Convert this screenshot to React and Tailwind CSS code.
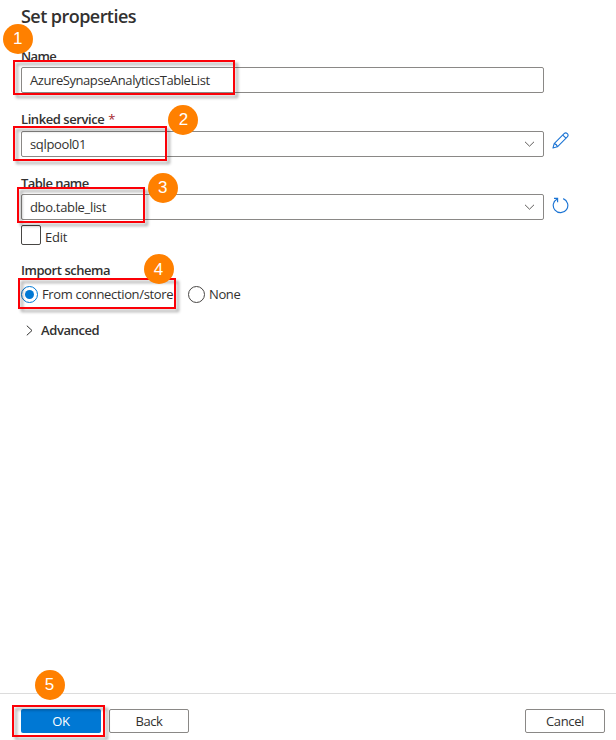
function Chevron() {
  return (
    <svg className="mr-[8px] h-[6px] w-[11px]" viewBox="0 0 11 6" fill="none" stroke="#605e5c" strokeWidth="1">
      <path d="M1 0.8 L5.5 5.2 L10 0.8" />
    </svg>
  );
}

function Pencil() {
  return (
    <svg className="-mt-[2px] h-[17px] w-[17px]" viewBox="0 0 18 18" fill="none" stroke="#1b74d4" strokeWidth="1.15" strokeLinejoin="round">
      <path d="M1 17 L2.3 12.3 L12.8 1.8 C13.8 0.8 15.1 0.7 16.2 1.8 C17.3 2.9 17.2 4.2 16.2 5.2 L5.7 15.7 Z" />
      <path d="M11.4 3.2 L14.8 6.6 M2.3 12.3 C4 12.6 5.4 14 5.7 15.7" />
    </svg>
  );
}

function Refresh() {
  return (
    <svg className="mt-[2px] h-[17px] w-[17px]" viewBox="0 0 17 17" fill="none" stroke="#1b74d4" strokeWidth="1.15">
      <path d="M11.2 1.6 A7.3 7.3 0 1 1 5.2 1.9" />
      <path d="M2 1.4 H5.6 V5.2" />
    </svg>
  );
}

function Field({ label, required, value, select, tracking, labelTracking, icon }) {
  return (
    <div>
      <div className={`h-[18px] text-[13px] font-[560] ${required ? "leading-[16px]" : "leading-[18px]"} ${labelTracking}`}>
        {label}
        {required && <span className="ml-[4px] font-normal text-[#a4262c]">*</span>}
      </div>
      <div className="mt-[2px] flex items-center">
        <div className="flex h-[26px] w-[523px] items-center justify-between rounded-[2px] border border-[#8a8886] pl-[8px]">
          <span className={`text-[13px] leading-[18px] ${tracking}`}>{value}</span>
          {select && <Chevron />}
        </div>
        {icon && <div className="-mt-[5px] ml-[8px]">{icon}</div>}
      </div>
    </div>
  );
}

function Radio({ checked, children }) {
  return (
    <div className="flex items-center">
      <span className={`flex h-[17px] w-[17px] items-center justify-center rounded-full border ${checked ? "border-[#0078d4]" : "border-[#484644]"}`}>
        {checked && <span className="h-[9px] w-[9px] rounded-full bg-[#0078d4]" />}
      </span>
      {children}
    </div>
  );
}

function Marker({ className, children }) {
  return (
    <div className={`absolute flex h-[30px] w-[30px] items-center justify-center rounded-full bg-[#ff8000] font-['Liberation_Sans',sans-serif] text-[17px] leading-none text-white ${className}`}>
      {children}
    </div>
  );
}

function Highlight({ className }) {
  return <div className={`absolute border-2 border-[#fb0007] drop-shadow-[3px_3px_1.5px_rgba(0,0,0,0.35)] ${className}`} />;
}

export default function App() {
  return (
    <div className="relative flex h-[740px] w-[616px] flex-col overflow-hidden bg-white font-['Open_Sans',sans-serif] text-[#323130]">
      <main className="flex-1 pl-[21px]">
        <h1 className="h-[29px] pt-[4px] text-[18px] leading-[24px] font-[560] tracking-[-0.55px]">Set properties</h1>
        <div className="mt-[18px] flex flex-col gap-[18px]">
          <Field label="Name" value="AzureSynapseAnalyticsTableList" tracking="tracking-[-0.43px]" labelTracking="tracking-[-0.6px]" />
          <Field label="Linked service" required select value="sqlpool01" tracking="tracking-[-0.35px]" labelTracking="tracking-[-0.43px]" icon={<Pencil />} />
          <div className="-mt-px">
            <Field label="Table name" select value="dbo.table_list" tracking="tracking-[-0.33px]" labelTracking="tracking-[-0.55px]" icon={<Refresh />} />
          </div>
        </div>
        <div className="mt-[5px] flex h-[21px] items-start">
          <span className="h-[20px] w-[20px] rounded-[2px] border border-[#484644]" />
          <span className="mt-[3px] ml-[4px] text-[13px] leading-[18px] tracking-[-0.2px]">Edit</span>
        </div>
        <div className="mt-[15px] text-[13px] leading-[18px] font-[560] tracking-[-0.45px]">Import schema</div>
        <div className="mt-[6px] flex h-[18px] items-center gap-[15px]">
          <Radio checked>
            <span className="ml-[4px] w-[131px] text-[13px] leading-[18px] tracking-[-0.35px] whitespace-nowrap">From connection/store</span>
          </Radio>
          <Radio>
            <span className="ml-[4px] text-[13px] leading-[18px] tracking-[-0.4px]">None</span>
          </Radio>
        </div>
        <div className="mt-[18px] flex items-center">
          <svg className="ml-[5px] h-[11px] w-[7px]" viewBox="0 0 7 11" fill="none" stroke="#323130">
            <path d="M0.8 0.7 L6 5.5 L0.8 10.3" />
          </svg>
          <span className="ml-[8px] text-[13px] leading-[18px] font-[560] tracking-[-0.4px]">Advanced</span>
        </div>
      </main>
      <footer className="flex h-[47px] items-start border-t border-[#dcdcdc] pt-[15px] pr-[11px] pl-[21px] text-[13px] leading-[22px]">
        <button className="h-[24px] w-[80px] rounded-[2px] bg-[#0078d4] font-medium tracking-[-0.3px] text-white">OK</button>
        <button className="ml-[8px] h-[24px] w-[80px] rounded-[2px] border border-[#8a8886] tracking-[-0.4px]">Back</button>
        <button className="ml-auto h-[24px] w-[80px] rounded-[2px] border border-[#8a8886] tracking-[-0.35px]">Cancel</button>
      </footer>

      <Marker className="top-[23.5px] left-[2.7px]">1</Marker>
      <Marker className="top-[104.5px] left-[168.4px]">2</Marker>
      <Marker className="top-[172.5px] left-[147.7px]">3</Marker>
      <Highlight className="top-[60px] left-[13px] h-[35px] w-[222px]" />
      <Highlight className="top-[126px] left-[13px] h-[35px] w-[154px]" />
      <Highlight className="top-[187px] left-[17px] h-[36px] w-[128px]" />
      <Highlight className="top-[278px] left-[18px] h-[31px] w-[158px]" />
      <Highlight className="top-[705px] left-[12px] h-[32px] w-[93px]" />
      <Marker className="top-[254.4px] left-[143.6px]">4</Marker>
      <Marker className="top-[669.5px] left-[34.6px]">5</Marker>
    </div>
  );
}
